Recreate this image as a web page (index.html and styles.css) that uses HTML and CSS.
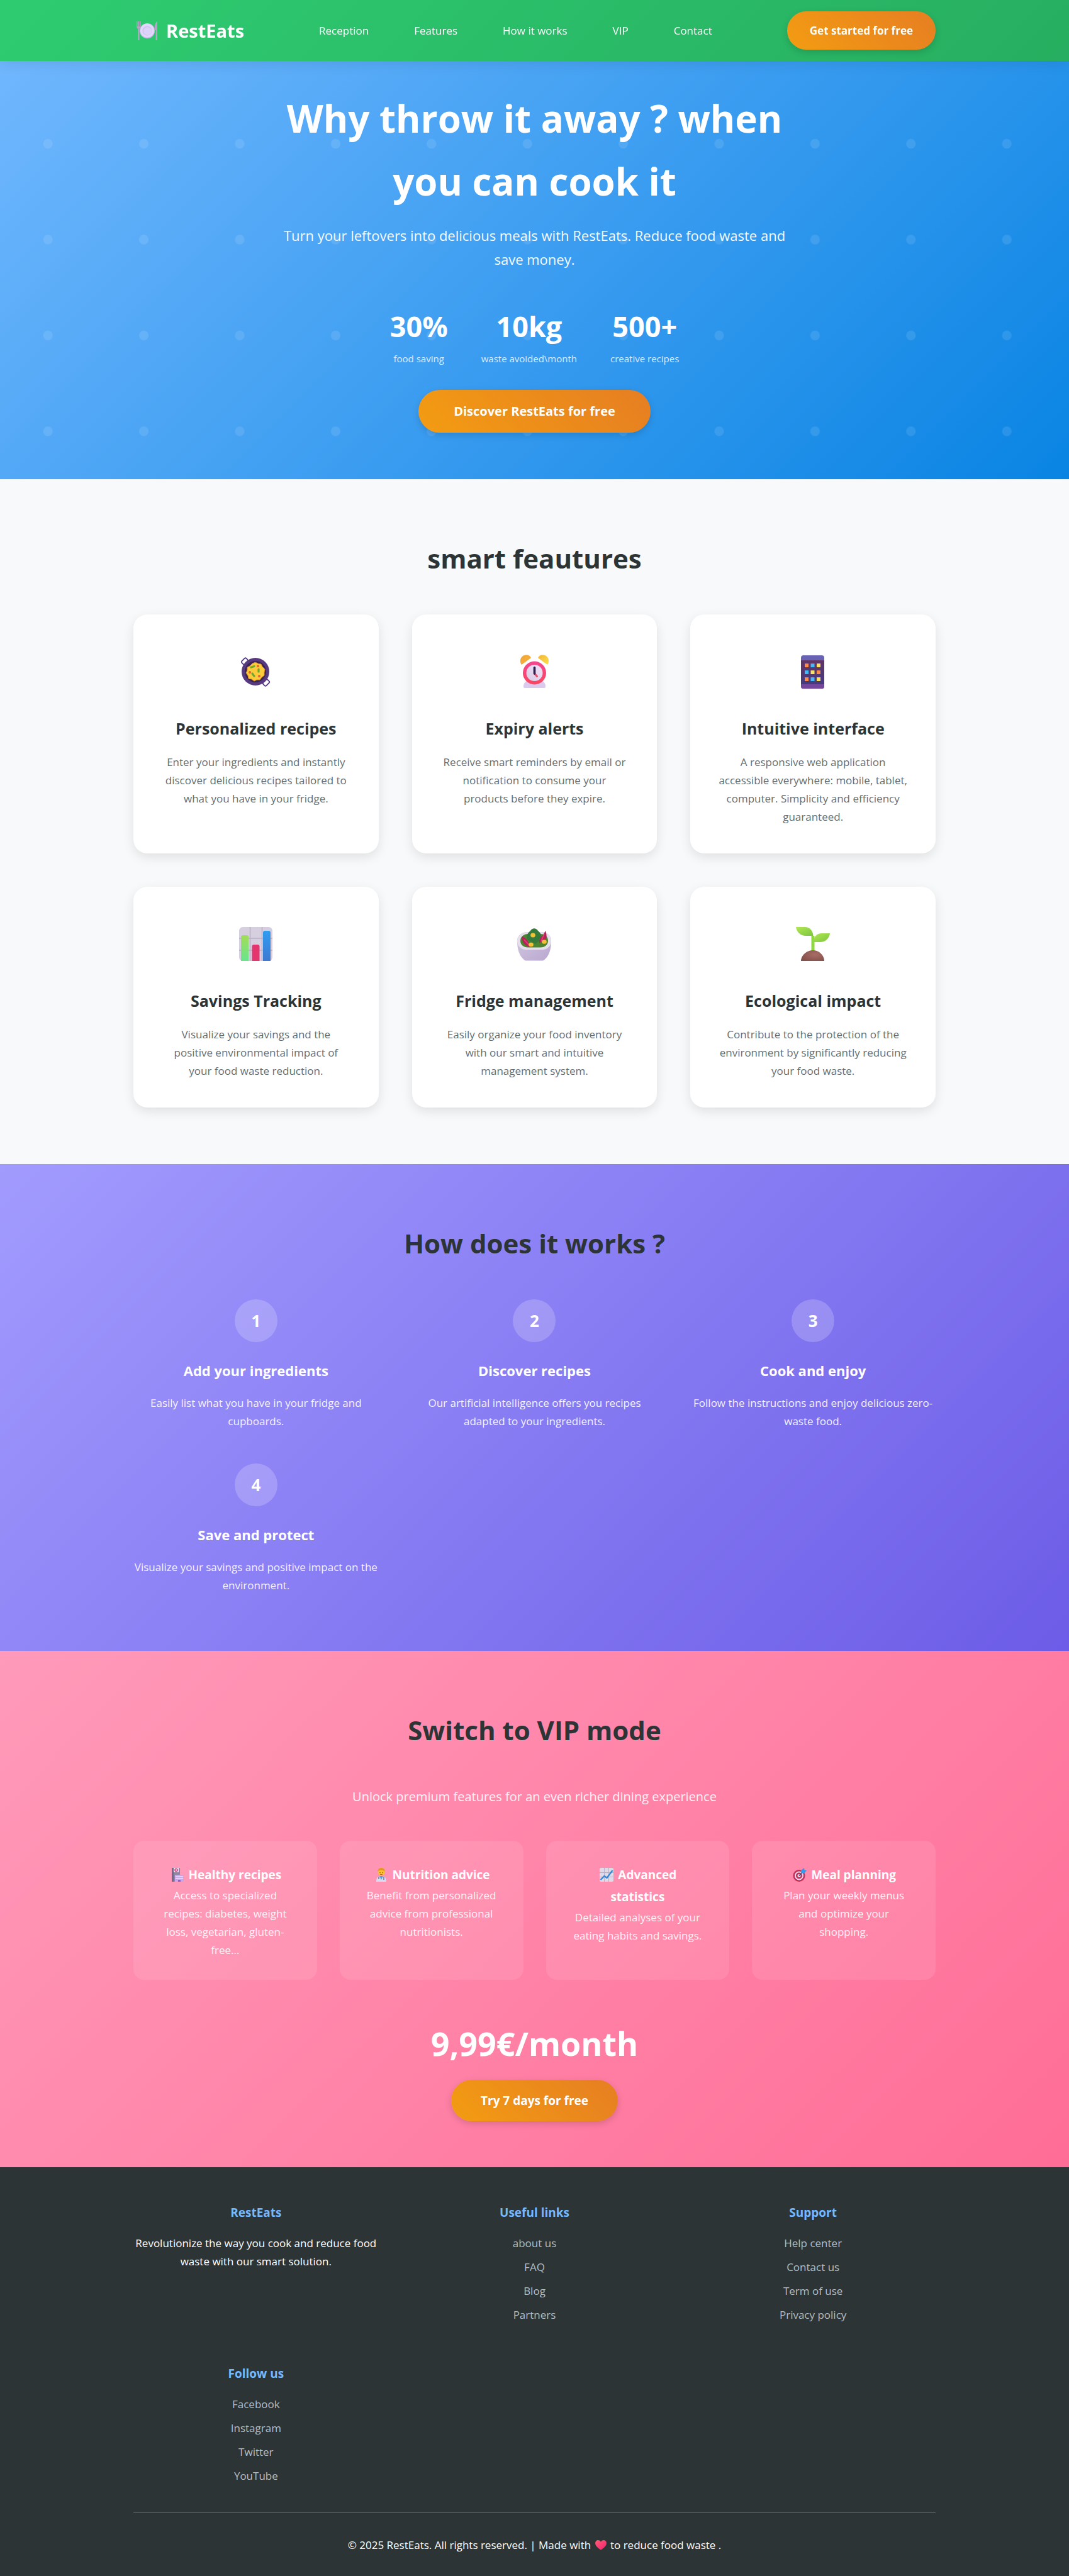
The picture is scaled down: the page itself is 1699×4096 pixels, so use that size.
FILE: index.html
```html
<!DOCTYPE html>
<html lang="en">
<head>
<meta charset="utf-8">
<meta name="viewport" content="width=device-width, initial-scale=1">
<title>RestEats</title>
<link rel="stylesheet" href="styles.css">
</head>
<body>
<header class="header">
  <div class="container header-row">
    <a class="logo" href="#home">
      <svg class="logo-icon" viewBox="0 0 36 36" aria-hidden="true">
        <circle cx="18" cy="18" r="12" fill="#cdb9ee"/>
        <circle cx="18" cy="17.500" r="11" fill="#e2d6fa"/>
        <circle cx="18" cy="18" r="7.500" fill="#cfc0f0"/>
        <circle cx="18.500" cy="18.500" r="6.500" fill="#ddd2f7"/>
        <path d="M1 3v8c0 2 1 3 2 3.500V33h2.500V14.500C7 14 7.500 13 7.500 11V3H6v8H5V3H3.500v8H2.500V3z" fill="#b6a3c4"/>
        <path d="M33.500 3c-3 2-4 7-4 14h2v16H34V3z" fill="#b6a3c4"/>
      </svg>
      <span>RestEats</span>
    </a>
    <nav class="nav">
      <a href="#home">Reception</a>
      <a href="#features">Features</a>
      <a href="#how">How it works</a>
      <a href="#vip">VIP</a>
      <a href="#contact">Contact</a>
    </nav>
    <button class="btn btn-small" type="button">Get started for free</button>
  </div>
</header>

<main>
<section class="hero" id="home">
  <svg class="hero-dots" viewBox="0 0 500 500" preserveAspectRatio="xMinYMin meet" aria-hidden="true">
    <defs>
      <pattern id="dots" width="100" height="100" patternUnits="userSpaceOnUse">
        <circle cx="50" cy="50" r="5" fill="#fff" fill-opacity="0.1"/>
      </pattern>
    </defs>
    <rect width="4000" height="500" fill="url(#dots)"/>
  </svg>
  <div class="hero-content">
    <h1>Why throw it away ? when you can cook it</h1>
    <p class="hero-text">Turn your leftovers into delicious meals with RestEats. Reduce food waste and save money.</p>
    <div class="stats">
      <div class="stat"><span class="stat-number">30%</span><span class="stat-label">food saving</span></div>
      <div class="stat"><span class="stat-number">10kg</span><span class="stat-label">waste avoided\month</span></div>
      <div class="stat"><span class="stat-number">500+</span><span class="stat-label">creative recipes</span></div>
    </div>
    <button class="btn btn-large" type="button">Discover RestEats for free</button>
  </div>
</section>

<section class="section features" id="features">
  <div class="container">
    <h2>smart feautures</h2>
    <div class="grid">
      <article class="card">
        <svg class="card-icon" viewBox="0 0 54 54" aria-hidden="true">
          <g fill="none" stroke="#563b86" stroke-width="1.800">
            <rect x="4" y="7" width="10" height="7" rx="2" transform="rotate(-45 9 10.500)"/>
            <rect x="38" y="41" width="10" height="7" rx="2" transform="rotate(-45 43 44.500)"/>
          </g>
          <circle cx="26" cy="27" r="22" fill="#56397f"/>
          <circle cx="26" cy="27" r="17" fill="#3a2552"/>
          <path d="M26 12l4 2 5 1 2 4 4 4-1 5 0 5-4 3-3 4-5 0-4 2-4-3-5-1-1-5-3-4 2-4 0-5 4-2 4-4z" fill="#fccb3b" stroke="#d98a1f"/>
          <g stroke="#6ea632" stroke-width="3.200" stroke-linecap="round">
            <path d="M19 20l5-1.500M31 23v4M21 30l3 4"/>
          </g>
          <g fill="#e8622c"><circle cx="30" cy="18" r="2"/><circle cx="17" cy="28" r="2"/><circle cx="32" cy="34" r="2"/></g>
        </svg>
        <h3>Personalized recipes</h3>
        <p>Enter your ingredients and instantly discover delicious recipes tailored to what you have in your fridge.</p>
      </article>
      <article class="card">
        <svg class="card-icon" viewBox="0 0 54 54" aria-hidden="true">
          <defs>
            <linearGradient id="ring" x1="0" y1="0" x2="0" y2="1"><stop offset="0" stop-color="#f2468f"/><stop offset="1" stop-color="#fb4660"/></linearGradient>
            <linearGradient id="bell-l" x1="0" y1="0" x2="1" y2="1"><stop offset="0" stop-color="#f0a53a"/><stop offset="1" stop-color="#f6b23c"/></linearGradient>
            <linearGradient id="bell-r" x1="0" y1="0" x2="1" y2="1"><stop offset="0" stop-color="#f2b53a"/><stop offset="1" stop-color="#fbe04a"/></linearGradient>
            <linearGradient id="face" x1="1" y1="0" x2="0" y2="1"><stop offset="0" stop-color="#f1e2fa"/><stop offset="1" stop-color="#d8cbe4"/></linearGradient>
          </defs>
          <path d="M10 50c0-5 4-9 9-9h17c5 0 9 4 9 9 0 3-1 3-3 3H13c-2 0-3 0-3-3z" fill="#dcc9ee"/>
          <path d="M7 16C3 11 5 3 11 1c5-2 9 0 11 4z" fill="url(#bell-l)"/>
          <path d="M48 16c4-5 2-13-4-15-5-2-9 0-11 4z" fill="url(#bell-r)"/>
          <circle cx="27.500" cy="29" r="18.500" fill="url(#ring)"/>
          <circle cx="27.500" cy="29" r="13" fill="url(#face)"/>
          <path d="M27.500 30l4 4.500" stroke="#f3466b" stroke-width="3" stroke-linecap="round"/>
          <path d="M27.500 20.500V30" stroke="#2f1f4a" stroke-width="3.600" stroke-linecap="round"/>
        </svg>
        <h3>Expiry alerts</h3>
        <p>Receive smart reminders by email or notification to consume your products before they expire.</p>
      </article>
      <article class="card">
        <svg class="card-icon" viewBox="0 0 54 54" aria-hidden="true">
          <defs><linearGradient id="screen" x1="0" y1="0" x2="0" y2="1"><stop offset="0" stop-color="#613465"/><stop offset="1" stop-color="#453b80"/></linearGradient></defs>
          <rect x="8" y="1" width="37" height="53" rx="4" fill="#6a63b4"/>
          <path d="M8 46h37v4c0 3-1 4-4 4H12c-3 0-4-1-4-4z" fill="#74479c"/>
          <rect x="8" y="9" width="37" height="38" fill="url(#screen)"/>
          <g fill="#f98b4e"><path d="M14 14h6v6h-6zM33 25h6v6h-6zM14 36h6v6h-6z"/></g>
          <g fill="#45b9f8"><path d="M23.500 14h6v6h-6zM14 25h6v6h-6zM23.500 36h6v6h-6z"/></g>
          <g fill="#fbe066"><path d="M33 14h6v6h-6zM23.500 25h6v6h-6zM33 36h6v6h-6z"/></g>
        </svg>
        <h3>Intuitive interface</h3>
        <p>A responsive web application accessible everywhere: mobile, tablet, computer. Simplicity and efficiency guaranteed.</p>
      </article>
      <article class="card">
        <svg class="card-icon" viewBox="0 0 54 54" aria-hidden="true">
          <defs>
            <linearGradient id="bar-g" x1="0" y1="0" x2="0" y2="1"><stop offset="0" stop-color="#a2dd57"/><stop offset="1" stop-color="#68e58d"/></linearGradient>
            <linearGradient id="bar-b" x1="0" y1="0" x2="0" y2="1"><stop offset="0" stop-color="#2f9df0"/><stop offset="1" stop-color="#3f78d2"/></linearGradient>
          </defs>
          <rect x="0" y="0" width="53" height="54" rx="6" fill="#d6cfdf"/>
          <path d="M17.500 0v54M36.500 0v54M0 18h53M0 37h53" stroke="#b9b0c4" stroke-width="1.500"/>
          <path d="M3 54V16q0-3 3-3h6q3 0 3 3v38z" fill="url(#bar-g)"/>
          <path d="M20.500 54V31q0-3 3-3h6q3 0 3 3v23z" fill="#e5356f"/>
          <path d="M38 54V9q0-3 3-3h6q3 0 3 3v45z" fill="url(#bar-b)"/>
        </svg>
        <h3>Savings Tracking</h3>
        <p>Visualize your savings and the positive environmental impact of your&nbsp;food waste reduction.</p>
      </article>
      <article class="card">
        <svg class="card-icon" viewBox="0 0 54 54" aria-hidden="true">
          <defs><linearGradient id="bowl" x1="0" y1="0" x2="1" y2="1"><stop offset="0" stop-color="#d3c8e2"/><stop offset="1" stop-color="#b9a8cf"/></linearGradient></defs>
          <path d="M0 22C0 13 8 8 16 8h22c9 0 16 5 16 14 0 15-4 26-13 31.500H13C4 48 0 37 0 22z" fill="url(#bowl)"/>
          <path d="M0 22C0 13 8 8 16 8h22c9 0 16 5 16 14 0 8-6 14-14 14H14C6 36 0 30 0 22z" fill="#e6e0ec"/>
          <path d="M5 22c0-7 6-11 12-11h20c7 0 12 4 12 11 0 6-5 10.500-12 10.500H17C10 32.500 5 28 5 22z" fill="#4d8432"/>
          <path d="M16 20c-2-7 1-11 5-14 3-5 9-5 12 0 5 4 7 9 4 14l-8 7z" fill="#367a3b"/>
          <path d="M8 15c4 2 8 4 10 10l6 4-4 3C12 30 7 24 8 15zM45 6c2 6 3 13-2 17l-8 2c0-5 2-10 6-12z" fill="#b91f5a"/>
          <path d="M11 20l8 9M43 11l-5 12" stroke="#e34579" stroke-width="1.500"/>
          <g fill="#f4c034"><ellipse cx="25" cy="13" rx="3.800" ry="3.500"/><ellipse cx="22" cy="28" rx="3.800" ry="3.300"/><ellipse cx="43" cy="23.500" rx="3.800" ry="3.300"/></g>
        </svg>
        <h3>Fridge management</h3>
        <p>Easily organize your food inventory with our smart and intuitive management system.</p>
      </article>
      <article class="card">
        <svg class="card-icon" viewBox="0 0 54 54" aria-hidden="true">
          <defs>
            <radialGradient id="soil" cx="0.600" cy="0.400" r="0.700"><stop offset="0" stop-color="#a96c66"/><stop offset="1" stop-color="#83504a"/></radialGradient>
            <linearGradient id="leaf" x1="0" y1="0" x2="1" y2="1"><stop offset="0" stop-color="#b2e653"/><stop offset="1" stop-color="#7cc63f"/></linearGradient>
          </defs>
          <path d="M27 38V14" stroke="#8fd83f" stroke-width="5"/>
          <path d="M0 0h14c8 0 13 6 13.500 14H16C7 14 1 8 0 0z" fill="url(#leaf)"/>
          <path d="M54 10H41c-8 0-13 6-13.500 14H38c9 0 15-6 16-14z" fill="url(#leaf)"/>
          <path d="M8 54c0-9 9-17 19-17s18 8 18 17z" fill="url(#soil)"/>
        </svg>
        <h3>Ecological impact</h3>
        <p>Contribute to the protection of the environment by significantly reducing your food waste.</p>
      </article>
    </div>
  </div>
</section>

<section class="section how" id="how">
  <div class="container">
    <h2>How does it works ?</h2>
    <div class="grid">
      <div class="step"><span class="step-number">1</span><h3>Add your ingredients</h3><p>Easily list what you have in your fridge and cupboards.</p></div>
      <div class="step"><span class="step-number">2</span><h3>Discover recipes</h3><p>Our artificial intelligence offers you recipes adapted to your ingredients.</p></div>
      <div class="step"><span class="step-number">3</span><h3>Cook and enjoy</h3><p>Follow the instructions and enjoy delicious zero-waste food.</p></div>
      <div class="step"><span class="step-number">4</span><h3>Save and protect</h3><p>Visualize your savings and positive impact on the environment.</p></div>
    </div>
  </div>
</section>

<section class="section vip" id="vip">
  <div class="container">
    <h2>Switch to VIP mode</h2>
    <p class="vip-intro">Unlock premium features for an even richer dining experience</p>
    <div class="vip-grid">
      <div class="vip-card">
        <h4><svg class="vip-icon" viewBox="0 0 22 22" aria-hidden="true"><path d="M2 0h13v22H2z" fill="#8d87a6"/><path d="M2 0h3v22H2z" fill="#6f6a8c"/><path d="M5 0h8v7H5z" fill="#f6e8f4"/><circle cx="9" cy="3.500" r="2" fill="none" stroke="#d6337c" stroke-width="1.500"/><path d="M7 11h14v11H7z" fill="#c9a5ee"/><path d="M8 14h12M8 17h12" stroke="#f0dcff" stroke-width="1.500"/><path d="M12 19h4v3h-4z" fill="#8a63c4"/></svg> Healthy recipes</h4>
        <p>Access to specialized recipes: diabetes, weight loss, vegetarian, gluten-free...</p>
      </div>
      <div class="vip-card">
        <h4><svg class="vip-icon" viewBox="0 0 22 22" aria-hidden="true"><path d="M3 22c0-7 3-9 8-9s8 2 8 9z" fill="#d9dcf0"/><path d="M8 13h6l-3 6z" fill="#5aa0dc"/><path d="M7 14v4M15 14v5" stroke="#5b6f92" stroke-width="1.300"/><circle cx="11" cy="7" r="5.500" fill="#fbbf35"/><path d="M5.500 6C5 2 8 0 11 0s6 2 5.500 6C14 3 8 3 5.500 6z" fill="#e59a1f"/><path d="M9 7v1M13 7v1" stroke="#5a3a1a"/><path d="M9 10q2 1.500 4 0" fill="none" stroke="#b3541e"/></svg> Nutrition advice</h4>
        <p>Benefit from personalized advice from professional nutritionists.</p>
      </div>
      <div class="vip-card">
        <h4><svg class="vip-icon" viewBox="0 0 22 22" aria-hidden="true"><rect width="22" height="22" rx="2" fill="#dfd9e8"/><path d="M7.500 0v22M14.500 0v22M0 7.500h22M0 14.500h22" stroke="#b9b0c8"/><path d="M1.500 19l6-6 4 3 9-12" fill="none" stroke="#3089d8" stroke-width="2.200"/></svg> Advanced<br>statistics</h4>
        <p>Detailed analyses of your eating habits and savings.</p>
      </div>
      <div class="vip-card">
        <h4><svg class="vip-icon" viewBox="0 0 22 22" aria-hidden="true"><circle cx="10" cy="12.500" r="9.500" fill="#c32d58"/><circle cx="10" cy="12.500" r="7" fill="#e6d6ea"/><circle cx="10" cy="12.500" r="5" fill="#c32d58"/><circle cx="10" cy="12.500" r="2.500" fill="#e6d6ea"/><path d="M10 12.500L17 5" stroke="#4a4a70" stroke-width="1.500"/><path d="M13 8V4l5-4 .5 3.500L22 4l-4 5z" fill="#2f9bee"/></svg> Meal planning</h4>
        <p>Plan your weekly menus and optimize your shopping.</p>
      </div>
    </div>
    <div class="price">9,99€/month</div>
    <button class="btn btn-medium" type="button">Try 7 days for free</button>
  </div>
</section>
</main>

<footer class="footer" id="contact">
  <div class="container">
    <div class="grid">
      <div class="footer-col">
        <h4>RestEats</h4>
        <p>Revolutionize the way you cook and reduce food waste with our smart solution.</p>
      </div>
      <div class="footer-col">
        <h4>Useful links</h4>
        <ul>
          <li><a href="#about">about us</a></li>
          <li><a href="#faq">FAQ</a></li>
          <li><a href="#blog">Blog</a></li>
          <li><a href="#partners">Partners</a></li>
        </ul>
      </div>
      <div class="footer-col">
        <h4>Support</h4>
        <ul>
          <li><a href="#help">Help center</a></li>
          <li><a href="#contact">Contact us</a></li>
          <li><a href="#terms">Term of use</a></li>
          <li><a href="#privacy">Privacy policy</a></li>
        </ul>
      </div>
      <div class="footer-col">
        <h4>Follow us</h4>
        <ul>
          <li><a href="#facebook">Facebook</a></li>
          <li><a href="#instagram">Instagram</a></li>
          <li><a href="#twitter">Twitter</a></li>
          <li><a href="#youtube">YouTube</a></li>
        </ul>
      </div>
    </div>
    <p class="copyright">© 2025 RestEats. All rights reserved. | Made with <svg class="heart" viewBox="0 0 20 18" aria-label="love"><defs><linearGradient id="heart-fill" x1="0" y1="0" x2="1" y2="1"><stop offset="0" stop-color="#ff5a72"/><stop offset="1" stop-color="#ee2474"/></linearGradient></defs><path d="M10 17.500C5 14 0 10 0 5.500 0 2 2.500 0 5 0c2.500 0 4 1 5 3 1-2 2.500-3 5-3s5 2 5 5.500c0 4.500-5 8.500-10 12z" fill="url(#heart-fill)"/></svg> to reduce food waste .</p>
  </div>
</footer>
</body>
</html>
```
FILE: styles.css
```css
* {
  box-sizing: border-box;
  margin: 0;
  padding: 0;
}

body {
  font-family: "Open Sans", "Noto Sans", sans-serif;
  font-size: 17px;
  line-height: 29px;
  color: #2d3436;
  background: #f8f9fa;
}

a {
  color: inherit;
  text-decoration: none;
}

ul {
  list-style: none;
}

.container {
  width: 100%;
  max-width: 1329px;
  margin: 0 auto;
  padding: 0 27px;
}

/* Header */
.header {
  position: fixed;
  top: 0;
  left: 0;
  right: 0;
  z-index: 10;
  padding: 18px 0;
  background: linear-gradient(135deg, #2ecc71, #27ae60);
  box-shadow: 0 2px 22px rgba(0, 0, 0, 0.1);
  color: #fff;
}

.header-row {
  display: flex;
  align-items: center;
  justify-content: space-between;
}

.logo {
  display: flex;
  align-items: center;
  gap: 12px;
  padding-left: 4px;
  font-size: 29px;
  font-weight: 700;
}

.logo-icon {
  width: 36px;
  height: 36px;
}

.nav {
  display: flex;
  gap: 72px;
}

/* Buttons */
.btn {
  border: 0;
  border-radius: 55px;
  background: linear-gradient(45deg, #f39c12, #e67e22);
  box-shadow: 0 4px 12px rgba(0, 0, 0, 0.15);
  color: #fff;
  font-family: inherit;
  font-weight: 700;
  cursor: pointer;
}

.btn-small {
  padding: 16px 36px;
  font-size: 17px;
  line-height: 29px;
}

.btn-large {
  padding: 17px 56px;
  font-size: 20px;
  line-height: 34px;
}

.btn-medium {
  padding: 16px 47px;
  font-size: 19px;
  line-height: 34px;
}

/* Hero */
.hero {
  position: relative;
  padding: 138px 27px 74px;
  background: linear-gradient(135deg, #74b9ff, #0984e3);
  color: #fff;
  text-align: center;
}

.hero-dots {
  position: absolute;
  inset: 0;
  width: 100%;
  height: 100%;
}

.hero-content {
  position: relative;
  max-width: 885px;
  margin: 0 auto;
}

.hero h1 {
  margin-bottom: 17px;
  font-size: 60px;
  line-height: 100px;
}

.hero-text {
  margin-bottom: 51px;
  padding: 0 20px;
  font-size: 22px;
  line-height: 38px;
  opacity: 0.95;
}

.stats {
  display: flex;
  justify-content: center;
  gap: 53px;
  margin-bottom: 36px;
}

.stat {
  display: flex;
  flex-direction: column;
}

.stat-number {
  font-size: 45px;
  font-weight: 700;
  line-height: 74px;
}

.stat-label {
  font-size: 15px;
  line-height: 28px;
  opacity: 0.8;
}

/* Sections */
.section {
  padding: 90px 0;
  text-align: center;
}

.section h2 {
  margin-bottom: 53px;
  color: #2d3436;
  font-size: 42px;
  line-height: 72px;
}

.grid {
  display: grid;
  grid-template-columns: repeat(3, 1fr);
  gap: 53px;
}

.features {
  background: #f8f9fa;
}

.card {
  padding: 44px;
  border-radius: 22px;
  background: #fff;
  box-shadow: 0 6px 18px rgba(0, 0, 0, 0.1);
}

.card-icon {
  display: block;
  width: 54px;
  height: 54px;
  margin: 20px auto 42px;
}

.card h3 {
  margin-bottom: 18px;
  font-size: 25px;
  line-height: 42px;
}

.card p {
  color: #636e72;
}

/* Steps */
.how {
  background: linear-gradient(135deg, #a29bfe, #6c5ce7);
  color: #fff;
}

.step-number {
  display: flex;
  align-items: center;
  justify-content: center;
  width: 68px;
  height: 68px;
  margin: 0 auto 28px;
  border-radius: 50%;
  background: rgba(255, 255, 255, 0.2);
  font-size: 26px;
  font-weight: 700;
}

.step h3 {
  margin-bottom: 20px;
  font-size: 22px;
  line-height: 34px;
}

.step p {
  opacity: 0.9;
}

/* VIP */
.vip {
  padding-bottom: 73px;
  background: linear-gradient(135deg, #ff9aba, #ff6d96);
  color: #fff;
}

.vip-intro {
  margin-bottom: 53px;
  font-size: 20px;
  line-height: 34px;
  opacity: 0.9;
}

.vip-grid {
  display: grid;
  grid-template-columns: repeat(4, 1fr);
  gap: 36px;
  margin-bottom: 58px;
}

.vip-card {
  padding: 37px 35px 33px;
  border-radius: 17px;
  background: rgba(255, 255, 255, 0.1);
}

.vip-card h4 {
  font-size: 19px;
  line-height: 35px;
}

.vip-card p {
  opacity: 0.9;
}

.vip-icon {
  width: 22px;
  height: 22px;
  margin: 0 2px;
  vertical-align: -4px;
}

.price {
  margin-bottom: 16px;
  font-size: 52px;
  font-weight: 700;
  line-height: 85px;
}

/* Footer */
.footer {
  padding: 55px 0 35px;
  background: #2d3436;
  color: #fff;
  text-align: center;
}

.footer h4 {
  margin-bottom: 17px;
  color: #74b9ff;
  font-size: 19px;
  line-height: 34px;
}

.footer li {
  margin-bottom: 9px;
  color: #b2bec3;
}

.copyright {
  margin-top: 35px;
  padding-top: 36px;
  border-top: 1px solid #636e72;
}

.heart {
  width: 18px;
  height: 16px;
  margin: 0 2px;
  vertical-align: -2px;
}
```
